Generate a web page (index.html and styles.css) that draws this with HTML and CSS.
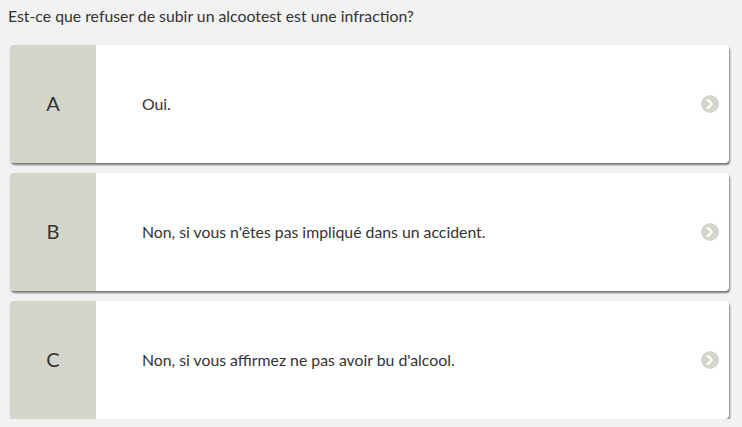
FILE: index.html
```html
<!DOCTYPE html>
<html lang="fr">
<head>
<meta charset="utf-8">
<link rel="stylesheet" href="styles.css">
</head>
<body>
<div class="page">
  <p class="question">Est-ce que refuser de subir un alcootest est une infraction?</p>
  <div class="answers">
    <div class="card">
      <div class="letter">A</div>
      <div class="text">Oui.</div>
      <div class="go"><svg width="18" height="18" viewBox="0 0 18 18"><circle cx="9" cy="9" r="9" fill="#d4d6cc"/><path d="M7 5.2 L10.8 9 L7 12.8" fill="none" stroke="#fff" stroke-width="2.4" stroke-linecap="round" stroke-linejoin="round"/></svg></div>
    </div>
    <div class="card">
      <div class="letter">B</div>
      <div class="text">Non, si vous n'êtes pas impliqué dans un accident.</div>
      <div class="go"><svg width="18" height="18" viewBox="0 0 18 18"><circle cx="9" cy="9" r="9" fill="#d4d6cc"/><path d="M7 5.2 L10.8 9 L7 12.8" fill="none" stroke="#fff" stroke-width="2.4" stroke-linecap="round" stroke-linejoin="round"/></svg></div>
    </div>
    <div class="card">
      <div class="letter">C</div>
      <div class="text">Non, si vous affirmez ne pas avoir bu d'alcool.</div>
      <div class="go"><svg width="18" height="18" viewBox="0 0 18 18"><circle cx="9" cy="9" r="9" fill="#d4d6cc"/><path d="M7 5.2 L10.8 9 L7 12.8" fill="none" stroke="#fff" stroke-width="2.4" stroke-linecap="round" stroke-linejoin="round"/></svg></div>
    </div>
  </div>
</div>
</body>
</html>
```
FILE: styles.css
```css
html, body {
  margin: 0;
  padding: 0;
  background: #f2f2f2;
}
body {
  font-family: Lato, "Liberation Sans", sans-serif;
  color: #333;
}
.page {
  padding: 5px 13px 0 8px;
}
.question {
  margin: 0;
  font-size: 15.8px;
  line-height: 22px;
}
.answers {
  margin-top: 18px;
  padding-left: 2px;
  display: flex;
  flex-direction: column;
  gap: 10px;
}
.card {
  display: flex;
  align-items: stretch;
  height: 118px;
  background: #fff;
  border-radius: 4px;
  overflow: hidden;
  box-shadow: 1px 2px 2px rgba(0,0,0,0.5);
}
.letter {
  width: 86px;
  flex: none;
  background: #d4d6cc;
  display: flex;
  align-items: center;
  justify-content: center;
  padding-bottom: 3px;
  box-sizing: border-box;
  font-size: 20px;
  color: #333;
}
.text {
  flex: 1;
  display: flex;
  align-items: center;
  padding-left: 46px;
  padding-bottom: 2px;
  font-size: 15.8px;
}
.go {
  flex: none;
  display: flex;
  align-items: center;
  padding-right: 10px;
}
.go svg {
  display: block;
}
```
